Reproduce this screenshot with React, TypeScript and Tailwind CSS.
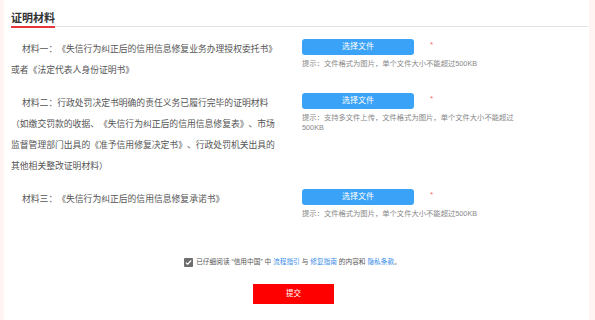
import React from "react";

const materials = [
  {
    label: "材料一：《失信行为纠正后的信用信息修复业务办理授权委托书》或者《法定代表人身份证明书》",
    hint: "提示：文件格式为图片，单个文件大小不能超过500KB",
  },
  {
    label:
      "材料二：行政处罚决定书明确的责任义务已履行完毕的证明材料（如缴交罚款的收据、《失信行为纠正后的信用信息修复表》、市场监督管理部门出具的《准予信用修复决定书》、行政处罚机关出具的其他相关整改证明材料）",
    hint: "提示：支持多文件上传，文件格式为图片，单个文件大小不能超过500KB",
  },
  {
    label: "材料三：《失信行为纠正后的信用信息修复承诺书》",
    hint: "提示：文件格式为图片，单个文件大小不能超过500KB",
  },
];

function MaterialRow({ label, hint }: { label: string; hint: string }) {
  return (
    <div className="flex items-start">
      <div className="w-[279px] pl-[11px] indent-[11px] text-[8.8px] leading-[21px] text-[#555]">{label}</div>
      <div className="ml-[23px] w-[225px]">
        <div className="flex items-start">
          <button className="flex h-[16px] w-[112px] items-center justify-center rounded-[3px] bg-[#3aa2f7] text-[8px] text-white">
            选择文件
          </button>
          <span className="ml-[16px] mt-[2px] text-[8px] leading-[8px] text-[#f56c6c]">*</span>
        </div>
        <div className="mt-[4px] text-[7.3px] leading-[10px] text-[#888]">{hint}</div>
      </div>
    </div>
  );
}

export default function App() {
  return (
    <div className="h-[320px] w-[595px] bg-[#fff4f2] pl-[4px] pr-[6px] font-['Liberation_Sans','Noto_Sans_CJK_SC',sans-serif] [text-spacing-trim:space-all]">
      <div className="h-full bg-white pt-[10px]">
        {/* Section title */}
        <div className="ml-[7px] mr-[1px] flex border-b border-[#e3e3e3]">
          <span className="-mb-[2px] border-b-2 border-[#e8353b] text-[11px] font-bold leading-[16px] text-[#333]">
            证明材料
          </span>
        </div>

        <div className="-ml-[4px] mt-[12px] flex flex-col gap-[12px]">
          {materials.map((m, i) => (
            <MaterialRow key={i} label={m.label} hint={m.hint} />
          ))}
        </div>

        {/* Agreement */}
        <div className="mt-[38px] flex items-center justify-center gap-[3px] pr-[8px] text-[6.7px] leading-[10px] text-[#555]">
          <span className="flex h-[9px] w-[9px] items-center justify-center rounded-[1px] bg-[#6e6e6e]">
            <svg viewBox="0 0 12 12" className="h-[7px] w-[7px]" fill="none" stroke="white" strokeWidth={2}>
              <path d="M2 6.5l2.5 2.5L10 3" strokeLinecap="round" strokeLinejoin="round" />
            </svg>
          </span>
          <span>
            已仔细阅读 “信用中国” 中 <span className="text-[#3b8ee8]">流程指引</span> 与{" "}
            <span className="text-[#3b8ee8]">修复指南</span> 的内容和 <span className="text-[#3b8ee8]">隐私条款</span>。
          </span>
        </div>

        <div className="mt-[17px] flex justify-center pr-[6px]">
          <button className="h-[20px] w-[81px] bg-[#ff0000] text-[7.5px] text-white">提交</button>
        </div>
      </div>
    </div>
  );
}
